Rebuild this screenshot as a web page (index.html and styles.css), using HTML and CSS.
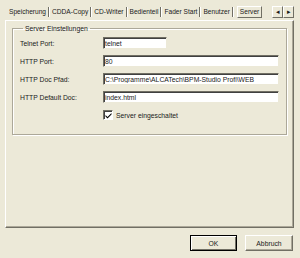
FILE: index.html
```html
<!DOCTYPE html>
<html>
  <head>
    <meta charset="UTF-8" />
    <title>Einstellungen</title>
    <link rel="stylesheet" href="styles.css">
  </head>
  <body>
    <div class="dialog">
      <div class="tab-strip">
        <div class="tabs">
          <span class="tab">Speicherung</span>
          <span class="tab">CDDA-Copy</span>
          <span class="tab">CD-Writer</span>
          <span class="tab">Bedienteil</span>
          <span class="tab">Fader Start</span>
          <span class="tab">Benutzer</span>
          <span class="tab active">Server</span>
        </div>
        <div class="scroll-buttons">
          <span class="scroll-button">&#9666;</span>
          <span class="scroll-button">&#9656;</span>
        </div>
      </div>

      <div class="page">
        <fieldset class="group">
          <legend>Server Einstellungen</legend>

          <div class="row">
            <label for="telnetPort">Telnet Port:</label>
            <input type="text" id="telnetPort" class="field short" value="telnet" />
          </div>
          <div class="row">
            <label for="httpPort">HTTP Port:</label>
            <input type="text" id="httpPort" class="field" value="80" />
          </div>
          <div class="row">
            <label for="docPath">HTTP Doc Pfad:</label>
            <input type="text" id="docPath" class="field" value="C:\Programme\ALCATech\BPM-Studio Profi\WEB" />
          </div>
          <div class="row">
            <label for="defaultDoc">HTTP Default Doc:</label>
            <input type="text" id="defaultDoc" class="field" value="index.html" />
          </div>

          <div class="row check-row">
            <span class="check-box">
              <svg width="7" height="7" viewBox="0 0 7 7">
                <path d="M0.5 3 L2.5 5 L6.5 1 L6.5 2.6 L2.5 6.6 L0.5 4.6 Z" fill="#000" />
              </svg>
            </span>
            <span class="check-label">Server eingeschaltet</span>
          </div>
        </fieldset>
      </div>

      <div class="buttons">
        <button class="button default">OK</button>
        <button class="button">Abbruch</button>
      </div>
    </div>
  </body>
</html>
```

FILE: styles.css
```css
:root {
  --face: #ece9d8;
  --shadow: #aca899;
  --dark: #716f64;
  --light: #ffffff;
  --text: #1a1a1a;
}

html,
body {
  margin: 0;
  padding: 0;
}

body {
  width: 300px;
  height: 258px;
  background-color: var(--face);
  color: var(--text);
  font-family: "Liberation Sans", Arial, sans-serif;
  font-size: 6.8px;
  overflow: hidden;
}

.dialog {
  display: flex;
  flex-direction: column;
  padding: 6px 6px 0 5px;
}

/* tab strip */
.tab-strip {
  display: flex;
  align-items: center;
  justify-content: space-between;
  height: 12px;
  padding-left: 4px;
  white-space: nowrap;
  font-size: 6.6px;
}

.tabs {
  display: flex;
  align-items: center;
  flex: 1;
  overflow: hidden;
}

.tab {
  padding: 0 2px 0 0;
  line-height: 10px;
  border-right: 1px solid var(--dark);
  box-shadow: 1px 0 0 var(--light);
  margin-right: 3px;
}

.tab.active {
  border: 1px solid var(--light);
  border-right-color: var(--dark);
  border-bottom-color: var(--dark);
  box-shadow: none;
  padding: 0 2px;
  margin-left: 1px;
}

.scroll-buttons {
  display: flex;
  flex-shrink: 0;
}

.scroll-button {
  display: flex;
  align-items: center;
  justify-content: center;
  width: 9px;
  height: 10px;
  font-size: 7px;
  border: 1px solid var(--light);
  border-right-color: var(--dark);
  border-bottom-color: var(--dark);
  background-color: var(--face);
}

/* page */
.page {
  height: 206px;
  margin-top: 2px;
  border: 1px solid var(--light);
  border-right-color: var(--dark);
  border-bottom-color: var(--dark);
  box-shadow: inset -1px -1px 0 var(--shadow);
  padding: 0 6px 0 6px;
}

.group {
  margin: 3px 0 0 0;
  padding: 4px 0 0 7px;
  height: 111px;
  border: 1px solid var(--shadow);
  box-shadow: inset 1px 1px 0 var(--light), 1px 1px 0 var(--light);
  box-sizing: border-box;
}

.group legend {
  padding: 0 2px;
  margin-left: 3px;
  line-height: 9px;
}

.row {
  display: flex;
  align-items: center;
  height: 12px;
  margin-bottom: 6px;
}

.row label {
  width: 83px;
  flex-shrink: 0;
}

.field {
  box-sizing: border-box;
  width: 176px;
  height: 12px;
  margin: 0;
  padding: 0 1px;
  font-family: inherit;
  font-size: 6.8px;
  color: var(--text);
  background-color: var(--light);
  border: 1px solid var(--dark);
  border-right-color: var(--face);
  border-bottom-color: var(--face);
  box-shadow: inset 1px 1px 0 #404040;
  outline: none;
}

.field.short {
  width: 64px;
}

.check-row {
  margin-top: 5px;
  padding-left: 83px;
}

.check-box {
  display: flex;
  align-items: center;
  justify-content: center;
  box-sizing: border-box;
  width: 10px;
  height: 10px;
  background-color: var(--light);
  border: 1px solid var(--dark);
  border-right-color: var(--light);
  border-bottom-color: var(--light);
  box-shadow: inset 1px 1px 0 #404040;
}

.check-label {
  margin-left: 3px;
}

/* dialog buttons */
.buttons {
  display: flex;
  justify-content: flex-end;
  gap: 8px;
  margin-top: 7px;
  padding-right: 1px;
}

.button {
  box-sizing: border-box;
  width: 48px;
  height: 16px;
  padding: 0;
  font-family: inherit;
  font-size: 6.8px;
  color: var(--text);
  background-color: var(--face);
  border: 1px solid var(--light);
  border-right-color: var(--dark);
  border-bottom-color: var(--dark);
  box-shadow: inset -1px -1px 0 var(--shadow);
}

.button.default {
  width: 47px;
  border: 1px solid #000;
  box-shadow: inset 1px 1px 0 var(--light), inset -1px -1px 0 var(--dark);
}
```
